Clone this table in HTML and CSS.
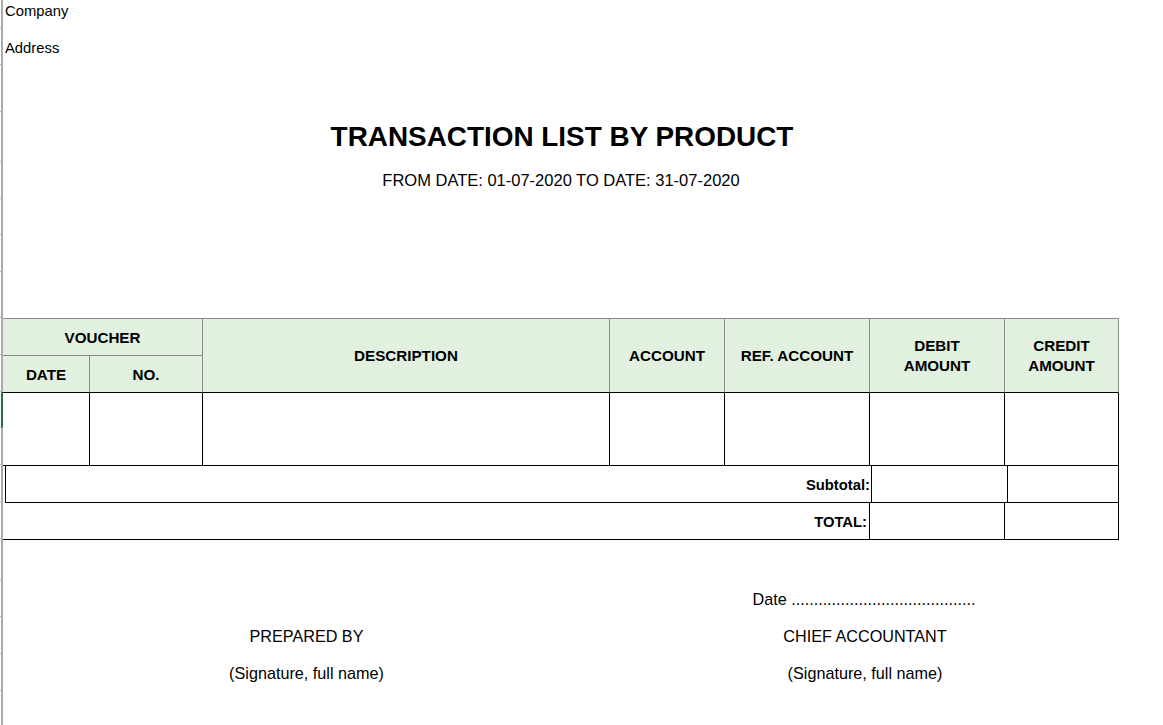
FILE: index.html
```html
<!DOCTYPE html>
<html>
<head>
<meta charset="utf-8">
<title>Transaction List by Product</title>
<link rel="stylesheet" href="styles.css">
</head>
<body>
<div class="sheet">
  <div class="rowhdr">
    <div class="tick" style="height:28px"></div>
    <div class="tick" style="height:37px"></div>
    <div class="tick" style="height:47px"></div>
    <div class="tick" style="height:50px"></div>
    <div class="tick" style="height:37px"></div>
    <div class="tick" style="height:36px"></div>
    <div class="tick" style="height:37px"></div>
    <div class="tick" style="height:46px"></div>
    <div class="tick" style="height:37px"></div>
    <div class="tick" style="height:37px"></div>
    <div class="tick selected" style="height:36px"></div>
    <div class="tick" style="height:37px"></div>
    <div class="tick" style="height:37px"></div>
    <div class="tick" style="height:37px"></div>
    <div class="tick" style="height:41px"></div>
    <div class="tick" style="height:37px"></div>
    <div class="tick" style="height:37px"></div>
    <div class="tick" style="height:37px"></div>
    <div class="tick last"></div>
  </div>
  <div class="content">
    <div class="company">Company</div>
    <div class="address">Address</div>
    <div class="spacer-a"></div>
    <div class="title">TRANSACTION LIST BY PRODUCT</div>
    <div class="subtitle">FROM DATE: 01-07-2020 TO DATE: 31-07-2020</div>
    <div class="spacer-b"></div>

    <div class="thead">
      <div class="hc voucher">VOUCHER</div>
      <div class="hc desc">DESCRIPTION</div>
      <div class="hc acc">ACCOUNT</div>
      <div class="hc ref">REF. ACCOUNT</div>
      <div class="hc debit">DEBIT<br>AMOUNT</div>
      <div class="hc credit">CREDIT<br>AMOUNT</div>
      <div class="hc date">DATE</div>
      <div class="hc no">NO.</div>
    </div>

    <div class="tbody">
      <div class="bc"></div>
      <div class="bc"></div>
      <div class="bc"></div>
      <div class="bc"></div>
      <div class="bc"></div>
      <div class="bc"></div>
      <div class="bc"></div>
    </div>

    <div class="subtotal">
      <div class="lbl sub-lbl">Subtotal:</div>
      <div class="sub-d"></div>
      <div class="sub-c"></div>
    </div>

    <div class="total">
      <div class="lbl tot-lbl">TOTAL:</div>
      <div class="tot-d"></div>
      <div class="tot-c"></div>
    </div>

    <div class="spacer-c"></div>

    <div class="sign">
      <div class="sg left r2">PREPARED BY</div>
      <div class="sg left r3">(Signature, full name)</div>
      <div class="sg right r1">Date .........................................</div>
      <div class="sg right r2">CHIEF ACCOUNTANT</div>
      <div class="sg right r3">(Signature, full name)</div>
    </div>
  </div>
</div>
</body>
</html>
```

FILE: styles.css
```css
* { box-sizing: border-box; }

html, body {
  margin: 0;
  padding: 0;
  background: #ffffff;
}

body {
  font-family: "Liberation Sans", Arial, sans-serif;
  color: #000;
  width: 1163px;
  height: 725px;
  overflow: hidden;
}

.sheet {
  display: flex;
  align-items: flex-start;
}

.rowhdr {
  width: 3px;
  display: flex;
  flex-direction: column;
  flex: none;
}

.tick {
  width: 3px;
  border-right: 2px solid #ababab;
  border-bottom: 1px solid #b8b8b8;
}

.tick.selected {
  border-right-color: #217346;
}

.tick.last {
  height: 60px;
  border-bottom: none;
}

.content {
  width: 1116px;
  display: flex;
  flex-direction: column;
}

.company {
  height: 28px;
  line-height: 22px;
  padding-left: 2px;
  font-size: 14.8px;
}

.address {
  height: 37px;
  line-height: 40px;
  padding-left: 2px;
  font-size: 14.8px;
}

.spacer-a { height: 47px; }

.title {
  height: 50px;
  line-height: 50px;
  text-align: center;
  font-weight: bold;
  font-size: 27.9px;
  padding-left: 2px;
}

.subtitle {
  height: 37px;
  line-height: 37px;
  text-align: center;
  font-size: 16.5px;
}

.spacer-b { height: 119px; }

/* table header */
.thead {
  display: grid;
  grid-template-columns: 87px 113px 407px 115px 145px 135px 114px;
  grid-template-rows: 37px 37px;
  border-top: 1px solid #8a8a8a;
  background: #e1f0df;
}

.hc {
  display: flex;
  align-items: center;
  justify-content: center;
  text-align: center;
  font-weight: bold;
  font-size: 15.2px;
  line-height: 20px;
  border-right: 1px solid #8a8a8a;
}

.voucher {
  grid-column: 1 / 3;
  grid-row: 1;
  border-bottom: 1px solid #8a8a8a;
  padding-top: 1px;
}
.date { grid-column: 1; grid-row: 2; border-bottom: 1px solid #000; padding-top: 2px; }
.no { grid-column: 2; grid-row: 2; border-bottom: 1px solid #000; padding-top: 2px; }
.desc { grid-column: 3; grid-row: 1 / 3; border-bottom: 1px solid #000; }
.acc { grid-column: 4; grid-row: 1 / 3; border-bottom: 1px solid #000; }
.ref { grid-column: 5; grid-row: 1 / 3; border-bottom: 1px solid #000; }
.debit { grid-column: 6; grid-row: 1 / 3; border-bottom: 1px solid #000; }
.credit { grid-column: 7; grid-row: 1 / 3; border-bottom: 1px solid #000; }

/* table body */
.tbody {
  display: grid;
  grid-template-columns: 87px 113px 407px 115px 145px 135px 114px;
  grid-template-rows: 73px;
}

.bc {
  border-right: 1px solid #000;
  border-bottom: 1px solid #000;
}

/* subtotal row */
.subtotal {
  display: flex;
  height: 37px;
  padding-left: 2px;
}

.lbl {
  display: flex;
  align-items: center;
  justify-content: flex-end;
  font-weight: bold;
  font-size: 14.8px;
  border-bottom: 1px solid #000;
  border-right: 1px solid #000;
}

.sub-lbl {
  width: 867px;
  border-left: 1px solid #000;
  padding-right: 1px;
  padding-top: 2px;
}
.sub-d {
  width: 136px;
  border-right: 1px solid #000;
  border-bottom: 1px solid #000;
}
.sub-c {
  width: 111px;
  border-right: 1px solid #000;
  border-bottom: 1px solid #000;
}

/* total row */
.total {
  display: flex;
  height: 37px;
}

.tot-lbl {
  width: 867px;
  padding-right: 2px;
  padding-top: 2px;
}
.tot-d {
  width: 135px;
  border-right: 1px solid #000;
  border-bottom: 1px solid #000;
}
.tot-c {
  width: 114px;
  border-right: 1px solid #000;
  border-bottom: 1px solid #000;
}

.spacer-c { height: 41px; }

/* signatures */
.sign {
  display: grid;
  grid-template-columns: 87px 113px 407px 115px 145px 135px 114px;
  grid-template-rows: 37px 37px 37px;
  font-size: 16.2px;
}

.sg {
  display: flex;
  align-items: center;
  justify-content: center;
  white-space: nowrap;
}

.sg.left { grid-column: 1 / 4; }
.sg.right { grid-column: 5 / 7; }
.r1 { grid-row: 1; padding-right: 2px; }
.r2 { grid-row: 2; }
.r3 { grid-row: 3; }
```
